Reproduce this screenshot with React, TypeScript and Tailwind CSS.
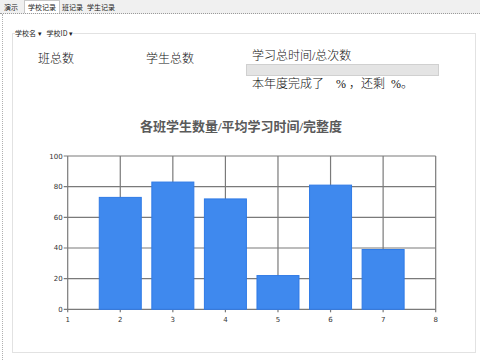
import React from "react";

const values = [73, 83, 72, 22, 81, 39];

function Chart() {
  const x0 = 54.7;
  const unit = 52.57;
  const yZero = 164.3;
  const yScale = 1.533;
  const xAt = (k: number) => x0 + (k - 1) * unit;
  const yAt = (v: number) => yZero - v * yScale;
  const grid = "#7a7a7a";
  return (
    <svg width="462" height="190" viewBox="0 0 462 190" className="block">
      {[0, 20, 40, 60, 80, 100].map((v) => (
        <g key={v}>
          <line x1={xAt(1) - 4} x2={xAt(8)} y1={yAt(v)} y2={yAt(v)} stroke={grid} strokeWidth="1.2" />
          <text x={xAt(1) - 5} y={yAt(v) + 2.5} fontSize="7" textAnchor="end" fill="#333" fontFamily="'DejaVu Sans', sans-serif">
            {v}
          </text>
        </g>
      ))}
      {[1, 2, 3, 4, 5, 6, 7, 8].map((k) => (
        <g key={k}>
          <line x1={xAt(k)} x2={xAt(k)} y1={yAt(100)} y2={yZero + 3} stroke={grid} strokeWidth="1.2" />
          <text x={xAt(k)} y={yZero + 13} fontSize="7" textAnchor="middle" fill="#333" fontFamily="'DejaVu Sans', sans-serif">
            {k}
          </text>
        </g>
      ))}
      {values.map((v, i) => {
        const cx = xAt(i + 2);
        return (
          <rect
            key={i}
            x={cx - 21}
            y={yAt(v)}
            width={42}
            height={yZero - yAt(v)}
            fill="#3f89ee"
            stroke="#2f7ae6"
            strokeWidth="1"
          />
        );
      })}
    </svg>
  );
}

export default function App() {
  return (
    <div
      className="w-[480px] h-[360px] bg-white overflow-hidden flex flex-col"
      style={{ fontFamily: "'Liberation Serif', 'Noto Sans CJK SC', serif" }}
    >
      <div
        className="h-[14px] bg-[#f0f0f0] border-b border-dotted border-[#9a9a9a] flex items-end pl-[2px] text-[7px] leading-[12px] text-[#222]"
        style={{ fontFamily: "'Noto Sans CJK SC', sans-serif" }}
      >
        <div className="px-[2px] h-[12px]">演示</div>
        <div className="ml-[4px] px-[3px] h-[13px] bg-white border border-b-0 border-[#c8c8c8]">学校记录</div>
        <div className="px-[2px] h-[12px]">班记录</div>
        <div className="px-[2px] h-[12px]">学生记录</div>
      </div>
      <div className="flex-1 flex">
        <div className="w-[2px] ml-[2px] border-l border-dotted border-[#b0b0b0]" />
        <div className="pl-[8px] pt-[15px]">
          <fieldset className="w-[463px] h-[324px] border border-[#e2e2e2] px-0">
            <legend
              className="ml-[2px] text-[7px] leading-[9px] text-[#222] flex gap-[5px]"
              style={{ fontFamily: "'Noto Sans CJK SC', sans-serif" }}
            >
              <span>学校名 ▾</span>
              <span>学校ID ▾</span>
            </legend>
            <div className="flex mt-[10px] h-[45px] text-[12px] leading-[16px] text-[#111] font-light">
              <div className="ml-[25px] w-[108px] mt-[3px]">班总数</div>
              <div className="w-[100px] mt-[3px]">学生总数</div>
              <div className="w-[193px] flex flex-col">
                <div className="pl-[6px]">学习总时间/总次数</div>
                <div className="h-[12px] bg-[#e4e4e4] border border-[#d0d0d0]" />
                <div className="pl-[6px]">
                  本年度完成了&nbsp;&nbsp;&nbsp;&nbsp;%&nbsp;，还剩&nbsp;&nbsp;%。
                </div>
              </div>
            </div>
            <div className="mt-[26px] h-[16px] leading-[16px] text-center text-[13px] font-semibold text-[#5a5a5a] pr-[6px]">
              各班学生数量/平均学习时间/完整度
            </div>
            <div className="mt-[10px]">
              <Chart />
            </div>
          </fieldset>
        </div>
      </div>
    </div>
  );
}
